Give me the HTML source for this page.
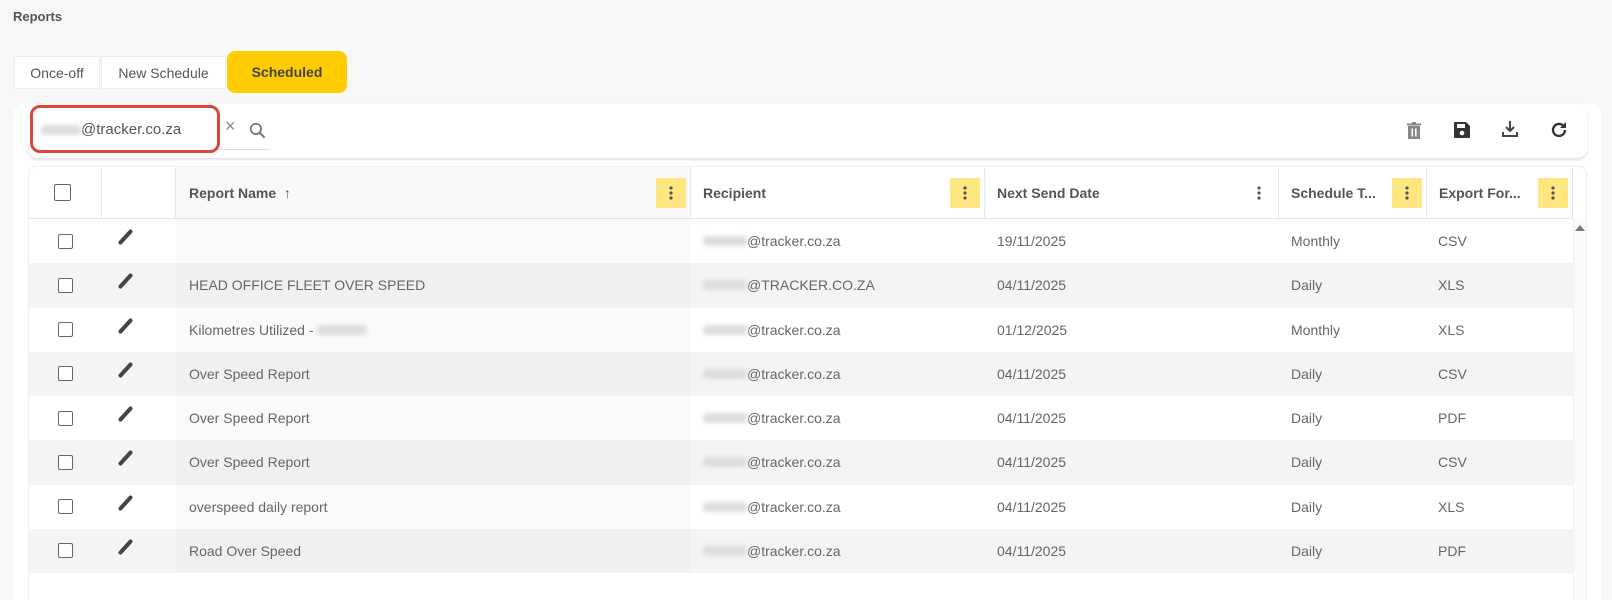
<!DOCTYPE html>
<html style="height:600px;overflow:hidden"><head><meta charset="utf-8"><style>
*{box-sizing:border-box;margin:0;padding:0}
body{width:1612px;height:600px;overflow:hidden;background:#f7f7f7;font-family:"Liberation Sans",sans-serif;color:#555;position:relative}
.abs{position:absolute}
.title{left:13px;top:9px;font-size:13px;font-weight:bold;color:#555}
.tab{top:56px;height:33px;background:#fff;font-size:14px;color:#555;display:flex;align-items:center;justify-content:center;border:1px solid #eee}
.outer{left:14px;top:104px;width:1587px;height:496px;background:#fff;border-radius:10px 10px 0 0}
.toolbar{left:28px;top:104px;width:1559px;height:54px;background:#fff;border-radius:10px;box-shadow:0 2px 3px rgba(0,0,0,.12)}
.search{left:30px;top:105px;width:190px;height:48px;border:3px solid #d9473a;border-radius:10px;font-size:15px;color:#555;padding:13px 0 0 8px}
.blur{display:inline-block;width:56px;height:10px;background:#ddd;filter:blur(2px);border-radius:3px;vertical-align:middle}
.tbl{left:28px;top:166px;width:1559px;height:434px;background:#fff;border-radius:8px 8px 0 0;border:1px solid #eee;border-bottom:none;overflow:hidden}
.hdr{position:absolute;top:0;height:52px;border-right:1px solid #e8e8e8;border-bottom:1px solid #e4e4e4;font-size:14px;font-weight:bold;color:#555;display:flex;align-items:center;padding-left:12px}
.dots{position:absolute;right:4px;top:11px;width:30px;height:30px;display:flex;align-items:center;justify-content:center}
.dots.y{background:#ffe680}
.row{position:absolute;left:0;width:1545px;height:44.25px}
.row.e{background:#f4f4f4}
.cell{position:absolute;top:0;height:100%;display:flex;align-items:center;font-size:14px;color:#666}
.cb{width:15px;height:15px;border:1.5px solid #666;border-radius:2px;background:#fff}
</style></head><body>
<div class="abs title">Reports</div>
<div class="abs tab" style="left:14px;width:86px">Once-off</div>
<div class="abs tab" style="left:101px;width:125px">New Schedule</div>
<div class="abs" style="left:227px;top:51px;width:120px;height:42px;background:#ffcc00;border-radius:8px;font-size:14px;font-weight:bold;color:#444;display:flex;align-items:center;justify-content:center">Scheduled</div>
<div class="abs outer"></div>
<div class="abs toolbar"></div>
<div class="abs search"><span class="blur" style="width:40px"></span>@tracker.co.za</div>
<div class="abs" style="left:220px;top:149px;width:50px;height:1px;background:#ddd"></div>
<div class="abs" style="left:225px;top:116px;font-size:18px;color:#888">×</div>
<svg class="abs" style="left:248px;top:121px" width="19" height="19" viewBox="0 0 24 24"><circle cx="10" cy="10" r="6.5" fill="none" stroke="#777" stroke-width="2.3"/><path d="M15 15l6 6" stroke="#777" stroke-width="2.5"/></svg>
<svg class="abs" style="left:1406px;top:122px" width="16" height="17" viewBox="0 0 16 17"><rect x="1" y="1.5" width="14" height="2" fill="#888"/><rect x="6" y="0" width="4" height="2" fill="#888"/><rect x="2" y="4" width="12" height="13" fill="#888"/><rect x="5.5" y="6.5" width="1.6" height="8" fill="#fff"/><rect x="9" y="6.5" width="1.6" height="8" fill="#fff"/></svg>
<svg class="abs" style="left:1453px;top:121px" width="18" height="18" viewBox="0 0 18 18"><path d="M1 2a1 1 0 011-1h11l4 4v11a1 1 0 01-1 1H2a1 1 0 01-1-1z" fill="#333"/><rect x="4" y="3" width="8" height="4" fill="#fff"/><circle cx="9" cy="12" r="2.3" fill="#fff"/></svg>
<svg class="abs" style="left:1501px;top:120px" width="18" height="18" viewBox="0 0 18 18"><path d="M9 1v10M5 7l4 4 4-4" stroke="#444" stroke-width="2" fill="none"/><path d="M2 12v4h14v-4" stroke="#444" stroke-width="2" fill="none"/></svg>
<svg class="abs" style="left:1550px;top:121px" width="18" height="18" viewBox="0 0 18 18"><path d="M15 9a6 6 0 11-2-4.5" stroke="#333" stroke-width="2.3" fill="none"/><path d="M16 1v6h-6z" fill="#333"/></svg>

<div class="abs tbl">
<div class="hdr" style="left:0;width:73px;justify-content:center;padding:0 6px 0 0"><div class="cb" style="width:17px;height:17px"></div></div>
<div class="hdr" style="left:73px;width:74px"></div>
<div class="hdr" style="left:147px;width:515px;background:#f8f8f8;padding-left:13px">Report Name&nbsp;&nbsp;<span style="font-weight:normal">↑</span><div class="dots y"><svg width="4" height="14"><circle cx="2" cy="2" r="1.6" fill="#555"/><circle cx="2" cy="7" r="1.6" fill="#555"/><circle cx="2" cy="12" r="1.6" fill="#555"/></svg></div></div>
<div class="hdr" style="left:662px;width:294px">Recipient<div class="dots y"><svg width="4" height="14"><circle cx="2" cy="2" r="1.6" fill="#555"/><circle cx="2" cy="7" r="1.6" fill="#555"/><circle cx="2" cy="12" r="1.6" fill="#555"/></svg></div></div>
<div class="hdr" style="left:956px;width:294px">Next Send Date<div class="dots"><svg width="4" height="14"><circle cx="2" cy="2" r="1.6" fill="#555"/><circle cx="2" cy="7" r="1.6" fill="#555"/><circle cx="2" cy="12" r="1.6" fill="#555"/></svg></div></div>
<div class="hdr" style="left:1250px;width:148px">Schedule T...<div class="dots y"><svg width="4" height="14"><circle cx="2" cy="2" r="1.6" fill="#555"/><circle cx="2" cy="7" r="1.6" fill="#555"/><circle cx="2" cy="12" r="1.6" fill="#555"/></svg></div></div>
<div class="hdr" style="left:1398px;width:146px">Export For...<div class="dots y"><svg width="4" height="14"><circle cx="2" cy="2" r="1.6" fill="#555"/><circle cx="2" cy="7" r="1.6" fill="#555"/><circle cx="2" cy="12" r="1.6" fill="#555"/></svg></div></div>
<div class="abs" style="left:1544px;top:52px;width:15px;height:382px;background:#fafafa;border-left:1px solid #eee"></div>
<svg class="abs" style="left:1546px;top:58px" width="10" height="7"><path d="M5 0l5 6H0z" fill="#777"/></svg>
<div id="rows"></div>
</div>
<script>
var d=[["","19/11/2025","Monthly","CSV",0],["HEAD OFFICE FLEET OVER SPEED","04/11/2025","Daily","XLS",1],["Kilometres Utilized - ","01/12/2025","Monthly","XLS",0],["Over Speed Report","04/11/2025","Daily","CSV",0],["Over Speed Report","04/11/2025","Daily","PDF",0],["Over Speed Report","04/11/2025","Daily","CSV",0],["overspeed daily report","04/11/2025","Daily","XLS",0],["Road Over Speed","04/11/2025","Daily","PDF",0]];
var h="";
d.forEach(function(r,i){var e=i%2==1;var top=52+i*44.25;
var em=r[4]?'<span class="blur" style="width:44px"></span>@TRACKER.CO.ZA':'<span class="blur" style="width:44px"></span>@tracker.co.za';
var nm=r[0]+(i==2?'<span class="blur" style="width:50px;margin-left:4px"></span>':'');
h+='<div class="row'+(e?' e':'')+'" style="top:'+top+'px">'+
'<div class="cell" style="left:29px"><div class="cb"></div></div>'+
'<div class="cell" style="left:88px;margin-top:-5px"><svg width="18" height="18" viewBox="0 0 18 18"><path d="M3.5 15.5L13.5 4.5" stroke="#444" stroke-width="4" stroke-linecap="round"/><path d="M1.8 17.2l1.2-3.6 2.4 2.4z" fill="#444"/></svg></div>'+
'<div class="cell" style="left:147px;width:515px;padding-left:13px;background:'+(e?'#f0f0f0':'#fafafa')+'">'+nm+'</div>'+
'<div class="cell" style="left:674px">'+em+'</div>'+
'<div class="cell" style="left:968px">'+r[1]+'</div>'+
'<div class="cell" style="left:1262px">'+r[2]+'</div>'+
'<div class="cell" style="left:1409px">'+r[3]+'</div></div>';});
document.getElementById("rows").innerHTML=h;
</script>
</body></html>
